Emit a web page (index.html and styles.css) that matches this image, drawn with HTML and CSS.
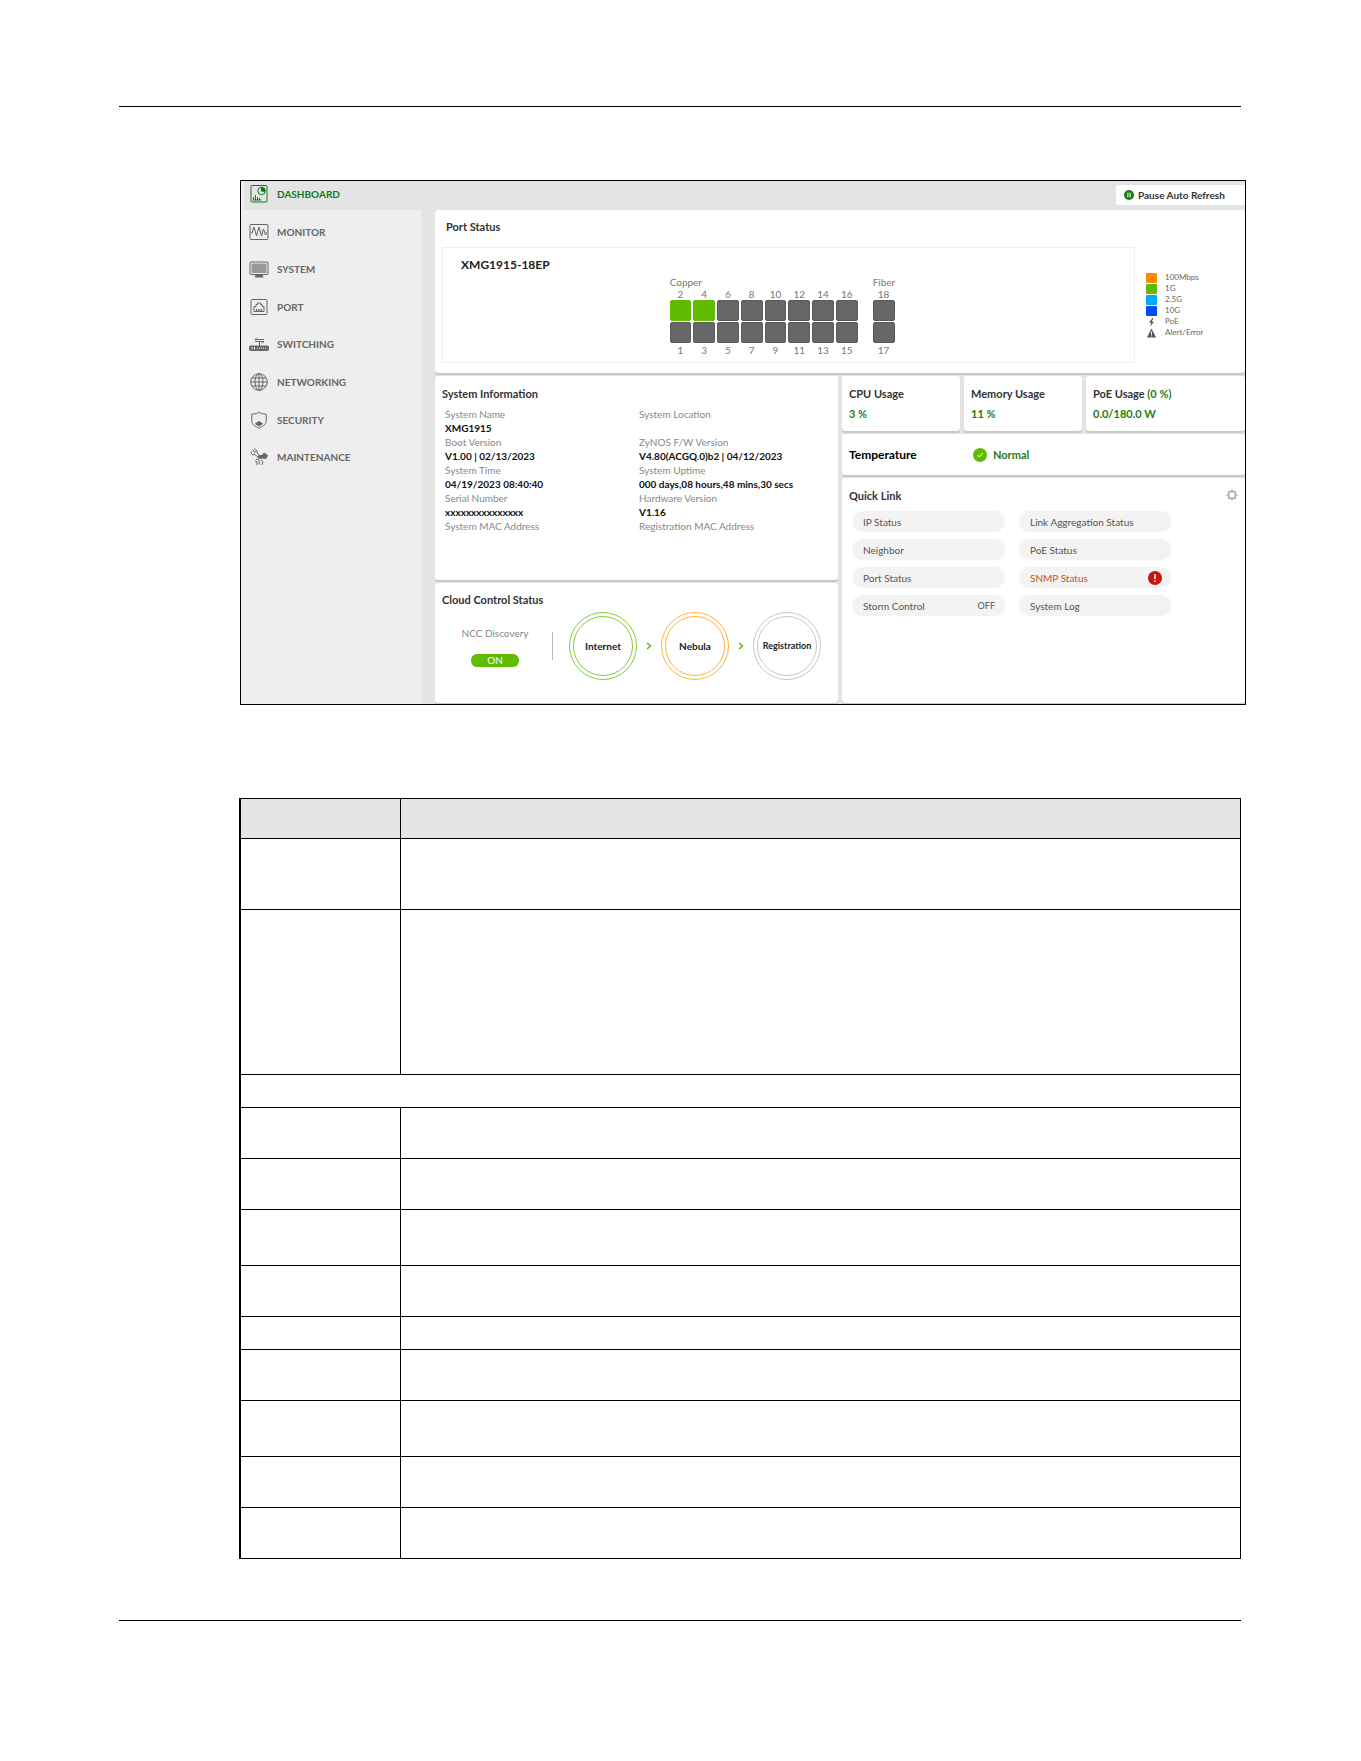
FILE: index.html
```html
<!DOCTYPE html>
<html lang="en">
<head>
<meta charset="utf-8">
<title>Dashboard</title>
<link rel="stylesheet" href="styles.css">
</head>
<body>
<hr class="rule">
<div class="screen">
  <nav class="sidebar">
    <a class="nav-item current" href="#dashboard">
      <svg class="icon" viewBox="0 0 20 20"><rect x="2" y="1.500" width="16" height="16.500" rx="1"/><circle cx="12.500" cy="7" r="3.700"/><path d="M12.500 3.500V7H16"/><path class="fill" d="M12.500 3.300V7h3.700a3.700 3.700 0 0 0-3.700-3.700z"/><path d="M4.500 16v-3M6.500 16v-5M8.500 16v-3M10.500 16v-2M4 16h8"/></svg>
      DASHBOARD</a>
    <div class="nav-list">
      <a class="nav-item" href="#monitor">
        <svg class="icon" viewBox="0 0 20 20"><rect x="1" y="2.500" width="18" height="15" rx="1"/><path d="M1.500 11H3L5 5l2.500 9L10 5l2.500 9 2-7 2 6L18 9.500"/></svg>
        MONITOR</a>
      <a class="nav-item" href="#system">
        <svg class="icon" viewBox="0 0 20 20"><rect x="1" y="3" width="18" height="12.500" rx="1"/><rect class="soft" x="2.500" y="4.500" width="15" height="9.500"/><path class="fill" d="M7.500 15.500h5l1.500 2.500H6z"/></svg>
        SYSTEM</a>
      <a class="nav-item" href="#port">
        <svg class="icon" viewBox="0 0 20 20"><rect x="2" y="2.500" width="16" height="15" rx="1"/><path d="M5 14.500v-5h2V7.500h1.500V6h3v1.500H13v2h2v5z"/><path d="M7.500 14v-2M9.200 14v-2M10.900 14v-2M12.600 14v-2"/></svg>
        PORT</a>
      <a class="nav-item" href="#switching">
        <svg class="icon" viewBox="0 0 20 20"><path d="M15 5.500H6l2-2M6 7.500h9l-2 2M10.500 7.500V12"/><rect class="fill" x=".5" y="12" width="19" height="4.500" rx="1"/><path class="cut" d="M3 13v2.500M5.500 13v2.500M8 14.200h1M10 14.200h1M12 14.200h1M14 14.200h1M16 14.200h1"/></svg>
        SWITCHING</a>
      <a class="nav-item" href="#networking">
        <svg class="icon" viewBox="0 0 20 20"><circle cx="10" cy="10" r="8.300"/><ellipse cx="10" cy="10" rx="4" ry="8.300"/><path d="M10 1.700v16.600M1.700 10h16.600M3 6h14M3 14h14"/></svg>
        NETWORKING</a>
      <a class="nav-item" href="#security">
        <svg class="icon" viewBox="0 0 20 20"><path d="M10 2 7.500 3.600 2.800 4.200v7c0 3.500 4 5.500 7.200 7 3.200-1.500 7.200-3.500 7.200-7v-7l-4.700-.6z"/><path class="fill" d="m10 11.500 3.500 2.300-3.500 2.200-3.500-2.200z"/></svg>
        SECURITY</a>
      <a class="nav-item" href="#maintenance">
        <svg class="icon" viewBox="0 0 20 20"><path d="M2 4.500a2.800 2.800 0 0 0 4 3l4 3.800M3.500 2.500 5 5l2.300-.5M5 2a3 3 0 0 1 3 4l3 3"/><path class="fill" d="m9 9 4-.5 2-2.500 3.500 2.500-1.500 3-4-.5-3 .5z"/><path d="m7 12 3 1 .5 4.500M6 14l2 1v3M12 13l2 1.500-1 3.500"/></svg>
        MAINTENANCE</a>
    </div>
  </nav>

  <main class="main">
    <div class="topbar">
      <button class="pause" type="button">
        <svg class="pause-icon" viewBox="0 0 10 10"><circle cx="5" cy="5" r="5" fill="#1e7d12"/><path d="M3.900 2.700v4.600M6.100 2.700v4.600" stroke="#fff"/></svg>
        Pause Auto Refresh</button>
    </div>

    <section class="card port-card">
      <h2 class="title port-title">Port Status</h2>
      <div class="port-row">
        <div class="device">
          <h3 class="model">XMG1915-18EP</h3>
          <div class="port-groups">
            <div>
              <div class="port-label">Copper</div>
              <div class="ports copper">
                <span>2</span><span>4</span><span>6</span><span>8</span><span>10</span><span>12</span><span>14</span><span>16</span>
                <i class="port up"></i><i class="port up"></i><i class="port"></i><i class="port"></i><i class="port"></i><i class="port"></i><i class="port"></i><i class="port"></i>
                <i class="port"></i><i class="port"></i><i class="port"></i><i class="port"></i><i class="port"></i><i class="port"></i><i class="port"></i><i class="port"></i>
                <span>1</span><span>3</span><span>5</span><span>7</span><span>9</span><span>11</span><span>13</span><span>15</span>
              </div>
            </div>
            <div>
              <div class="port-label">Fiber</div>
              <div class="ports fiber"><span>18</span><i class="port"></i><i class="port"></i><span>17</span></div>
            </div>
          </div>
        </div>
        <ul class="legend">
          <li><i class="swatch orange"></i>100Mbps</li>
          <li><i class="swatch green"></i>1G</li>
          <li><i class="swatch sky"></i>2.5G</li>
          <li><i class="swatch blue"></i>10G</li>
          <li><svg class="mark" viewBox="0 0 11 10"><path fill="#555" d="M6.500 1 3 5.500h2.200L4.300 9.500 8 4.700H5.800L7.500 1z"/></svg>PoE</li>
          <li><svg class="mark" viewBox="0 0 11 10"><path fill="#555" d="M5.500.5 10 9.500H1z"/><path d="M5.500 3.500v3M5.500 7.300v1" stroke="#fff"/></svg>Alert/Error</li>
        </ul>
      </div>
    </section>

    <div class="columns">
      <div class="stack">
        <section class="card info-card">
          <h2 class="title">System Information</h2>
          <dl class="info">
            <div><dt>System Name</dt><dd>XMG1915</dd></div>
            <div><dt>System Location</dt><dd></dd></div>
            <div><dt>Boot Version</dt><dd>V1.00 | 02/13/2023</dd></div>
            <div><dt>ZyNOS F/W Version</dt><dd>V4.80(ACGQ.0)b2 | 04/12/2023</dd></div>
            <div><dt>System Time</dt><dd>04/19/2023 08:40:40</dd></div>
            <div><dt>System Uptime</dt><dd>000 days,08 hours,48 mins,30 secs</dd></div>
            <div><dt>Serial Number</dt><dd>xxxxxxxxxxxxxxx</dd></div>
            <div><dt>Hardware Version</dt><dd>V1.16</dd></div>
            <div><dt>System MAC Address</dt><dd></dd></div>
            <div><dt>Registration MAC Address</dt><dd></dd></div>
          </dl>
        </section>
        <section class="card cloud-card">
          <h2 class="title">Cloud Control Status</h2>
          <div class="cloud">
            <div class="discovery">
              <span id="ncc">NCC Discovery</span>
              <button class="toggle" type="button" aria-labelledby="ncc">ON</button>
            </div>
            <div class="steps">
              <div class="ring ring-green"><span>Internet</span></div>
              <svg class="chevron" viewBox="0 0 6 8"><path d="m1 1 3.500 3L1 7"/></svg>
              <div class="ring ring-orange"><span>Nebula</span></div>
              <svg class="chevron" viewBox="0 0 6 8"><path d="m1 1 3.500 3L1 7"/></svg>
              <div class="ring ring-grey"><span>Registration</span></div>
            </div>
          </div>
        </section>
      </div>

      <div class="stack">
        <div class="usage">
          <section class="card usage-card"><h2 class="title">CPU Usage</h2><p class="reading">3 %</p></section>
          <section class="card usage-card"><h2 class="title">Memory Usage</h2><p class="reading">11 %</p></section>
          <section class="card usage-card"><h2 class="title">PoE Usage <span class="accent">(0 %)</span></h2><p class="reading">0.0/180.0 W</p></section>
        </div>
        <section class="card temperature">
          <h2 class="title">Temperature</h2>
          <svg class="check" viewBox="0 0 14 14"><circle cx="7" cy="7" r="7" fill="#5fbc02"/><path d="m4.500 7 1.800 1.800 3.400-3.600" fill="none" stroke="#fff"/></svg>
          <span class="normal">Normal</span>
        </section>
        <section class="card quick">
          <div class="quick-head">
            <h2 class="title">Quick Link</h2>
            <button class="gear" type="button" aria-label="Settings"><svg viewBox="0 0 12 12"><path d="M6 .5v11M.5 6h11M2.100 2.100l7.800 7.800M9.900 2.100 2.100 9.900" stroke="#aaa" stroke-width="1.600"/><circle cx="6" cy="6" r="3.500" fill="#fff" stroke="#aaa" stroke-width="1.600"/></svg></button>
          </div>
          <div class="links">
            <a class="pill" href="#ip">IP Status</a>
            <a class="pill" href="#lag">Link Aggregation Status</a>
            <a class="pill" href="#neighbor">Neighbor</a>
            <a class="pill" href="#poe">PoE Status</a>
            <a class="pill" href="#ports">Port Status</a>
            <a class="pill alert" href="#snmp">SNMP Status<svg class="warn" viewBox="0 0 14 14"><circle cx="7" cy="7" r="7" fill="#c8160e"/><path d="M7 3v5M7 9.500v1.500" stroke="#fff" stroke-width="1.500"/></svg></a>
            <a class="pill" href="#storm">Storm Control<span class="off">OFF</span></a>
            <a class="pill" href="#log">System Log</a>
          </div>
        </section>
      </div>
    </div>
  </main>
</div>

<table class="fields">
  <thead><tr class="row-head"><th></th><th></th></tr></thead>
  <tbody>
    <tr class="row-lg"><td></td><td></td></tr>
    <tr class="row-xl"><td></td><td></td></tr>
    <tr class="row-sm"><td colspan="2"></td></tr>
    <tr class="row"><td></td><td></td></tr>
    <tr class="row"><td></td><td></td></tr>
    <tr class="row-md"><td></td><td></td></tr>
    <tr class="row"><td></td><td></td></tr>
    <tr class="row-sm"><td></td><td></td></tr>
    <tr class="row"><td></td><td></td></tr>
    <tr class="row-md"><td></td><td></td></tr>
    <tr class="row"><td></td><td></td></tr>
    <tr class="row"><td></td><td></td></tr>
  </tbody>
</table>
<hr class="rule">
</body>
</html>
```
FILE: styles.css
```css
* { box-sizing: border-box; }
body {
  margin: 0;
  padding: 106px 120px 140px 119px;
  background: #fff;
  color: #333;
  font: 10px/14px Lato, "Liberation Sans", sans-serif;
}
h2, h3, p, dl, dd, ul { margin: 0; padding: 0; }
a { color: inherit; text-decoration: none; }
button { border: 0; padding: 0; font: inherit; color: inherit; }
svg { display: block; flex: none; }

.rule { margin: 0; border: 0; height: 1px; background: #000; }

.screen {
  display: flex;
  margin: 73px -5px 93px 121px;
  border: 1px solid #000;
  background: #e4e4e4;
}

/* Sidebar */
.sidebar { flex: none; width: 180px; background: #eee; }
.nav-item {
  display: flex;
  align-items: center;
  gap: 8px;
  padding-left: 8px;
  color: #666;
  font-weight: 700;
}
.current {
  height: 29px;
  margin-left: 3px;
  padding: 0 0 3px 5px;
  background: #e4e4e4;
  color: #117a1c;
}
.nav-list { display: grid; grid-auto-rows: 1fr; height: 263px; margin-top: 3px; }
.icon { width: 20px; height: 20px; fill: none; stroke: currentColor; stroke-width: 1; }
.icon .fill { fill: currentColor; }
.icon .soft { fill: #999; stroke: none; }
.icon .cut { stroke: #eee; }

/* Main area */
.main { flex: 1; min-width: 0; margin-left: 14px; display: flex; flex-direction: column; gap: 3px; padding-bottom: 1px; overflow: hidden; }
.topbar { display: flex; justify-content: flex-end; height: 26px; padding-top: 4px; }
.pause {
  display: flex;
  align-items: center;
  gap: 4px;
  width: 129px;
  height: 20px;
  padding-left: 8px;
  border-radius: 3px 0 0 3px;
  background: #fff;
  font-weight: 700;
}
.pause-icon { width: 10px; height: 10px; }
.card { background: #fff; border-radius: 3px; box-shadow: 0 2px 1px #c6c6c6; }
.title { font-size: 11px; font-weight: 700; line-height: 14px; color: #333; }

/* Port status */
.port-card { padding: 10px 0 10px 7px; }
.port-title { padding-left: 4px; margin-bottom: 13px; }
.port-row { display: flex; align-items: center; }
.device { flex: 1; padding: 9px 0 7px 18px; border: 1px solid #eee; }
.model { font-size: 12px; line-height: 16px; color: #222; }
.port-groups { display: flex; gap: 15px; margin-top: 3px; padding-left: 31%; color: #777; line-height: 12px; }
.ports { display: grid; column-gap: 2px; row-gap: 1px; grid-template-rows: 11px 21px 21px 11px; text-align: center; }
.copper { width: 188px; grid-template-columns: repeat(8, 1fr); }
.fiber { width: 22px; }
.port { border: 1px solid #5a5a5a; border-radius: 2px; background: #676767; }
.up { border-color: #5fbc02; background: #5fbc02; }
.legend { flex: none; width: 110px; padding-left: 11px; list-style: none; color: #666; font-size: 8px; line-height: 11px; }
.legend li { display: flex; align-items: center; gap: 8px; }
.swatch { width: 11px; height: 10px; border-radius: 1px; }
.mark { width: 11px; height: 10px; }
.orange { background: #ff8a00; }
.green { background: #5fbc02; }
.sky { background: #00aaff; }
.blue { background: #004cf0; }

.columns { display: grid; grid-template-columns: 1fr 1fr; gap: 4px; }
.stack { display: flex; flex-direction: column; gap: 3px; min-width: 0; }

/* System information */
.info-card { padding: 11px 7px 33px; }
.info { display: grid; grid-template-columns: 194px 1fr; margin-top: 6px; padding-left: 3px; }
.info div { min-height: 28px; }
.info dt { color: #888; }
.info dd { color: #111; font-weight: 700; white-space: nowrap; }

/* Cloud control */
.cloud-card { padding: 10px 7px 23px; }
.cloud { display: flex; align-items: center; margin-top: 5px; }
.discovery {
  display: flex;
  flex-direction: column;
  align-items: center;
  gap: 14px;
  width: 106px;
  color: #888;
}
.toggle { width: 48px; height: 13px; border-radius: 6px; background: #5fbc02; color: #fff; line-height: 13px; }
.steps { display: flex; align-items: center; gap: 9px; }
.steps::before { content: ""; width: 1px; height: 28px; margin: 0 7px 0 4px; background: #bbb; }
.ring { display: grid; width: 68px; height: 68px; padding: 3px; border: 1px solid; border-radius: 50%; }
.ring span { display: grid; place-items: center; border: 1px solid; border-color: inherit; border-radius: 50%; color: #222; font-weight: 700; }
.ring-green { border-color: #84cc3c; }
.ring-orange { border-color: #ffb43c; }
.ring-grey { border-color: #c8c8c8; font-size: 9px; }
.chevron { width: 6px; height: 8px; fill: none; stroke: #5fbc02; stroke-width: 1.5; }

/* Usage and temperature */
.usage { display: grid; grid-template-columns: 118fr 118fr 159fr; gap: 4px; }
.usage-card { padding: 11px 7px 10px; }
.reading { margin-top: 6px; }
.reading, .normal, .accent { color: #1e7d12; font-size: 11px; font-weight: 700; }
.temperature { display: flex; align-items: center; height: 41px; padding-left: 7px; }
.temperature .title { width: 124px; color: #000; font-size: 12px; }
.check { width: 14px; height: 14px; margin-right: 6px; }

/* Quick links */
.quick { flex: 1; padding: 11px 7px; }
.quick-head { display: flex; justify-content: space-between; }
.gear { width: 12px; height: 12px; background: none; }
.links { display: grid; grid-template-columns: 153px 153px; gap: 7px 14px; margin-top: 8px; padding-left: 3px; }
.pill {
  display: flex;
  align-items: center;
  justify-content: space-between;
  height: 21px;
  padding: 0 10px 0 11px;
  border-radius: 11px;
  background: #f3f3f3;
  color: #555;
}
.off { font-size: 9px; }
.alert { color: #c8502d; }
.warn { width: 14px; height: 14px; }

/* Field descriptions */
.fields {
  width: calc(100% - 120px);
  margin: 0 0 61px 120px;
  border: solid #000;
  border-width: 1px 1px 0 2px;
  border-spacing: 0;
  table-layout: fixed;
}
.fields th, .fields td { padding: 0; border-bottom: 1px solid #000; }
.fields th { background: #e5e5e5; }
.fields th:first-child { width: 160px; }
.fields th:first-child, .fields td:first-child:not([colspan]) { border-right: 1px solid #000; }
.row { height: 51px; }
.row-head { height: 40px; }
.row-sm { height: 33px; }
.row-md { height: 56px; }
.row-lg { height: 71px; }
.row-xl { height: 165px; }
```
